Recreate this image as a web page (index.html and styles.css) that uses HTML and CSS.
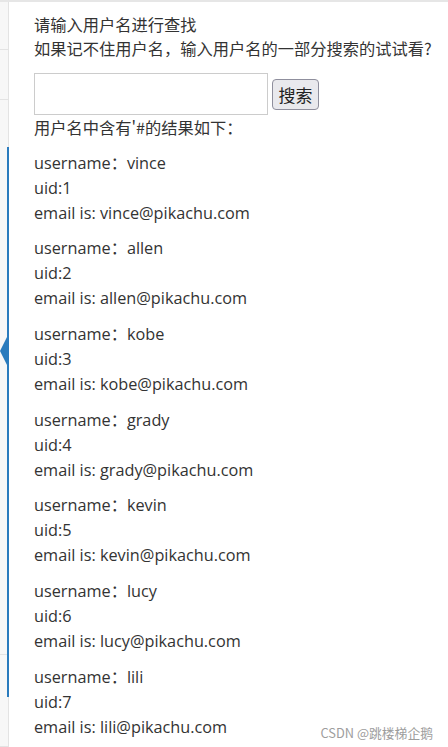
FILE: index.html
```html
<!DOCTYPE html>
<html lang="zh">
<head>
<meta charset="utf-8">
<link rel="stylesheet" href="styles.css">
</head>
<body>
<div class="page">
  <aside class="side">
    <div class="seg seg-a"></div>
    <div class="seg seg-b"></div>
    <div class="seg seg-c"></div>
    <div class="seg-active">
      <div class="act-top"></div>
      <div class="act-bottom"></div>
      <div class="arrow"></div>
    </div>
    <div class="seg seg-d"></div>
  </aside>
  <main class="main">
    <p class="intro">请输入用户名进行查找<br>如果记不住用户名，输入用户名的一部分搜索的试试看?</p>
    <form class="search">
      <input class="field" type="text">
      <button class="btn" type="button">搜索</button>
    </form>
    <p class="summary">用户名中含有'#的结果如下：</p>
    <div class="results">
      <p class="item">username：vince<br>uid:1<br>email is: vince@pikachu.com</p>
      <p class="item">username：allen<br>uid:2<br>email is: allen@pikachu.com</p>
      <p class="item">username：kobe<br>uid:3<br>email is: kobe@pikachu.com</p>
      <p class="item">username：grady<br>uid:4<br>email is: grady@pikachu.com</p>
      <p class="item">username：kevin<br>uid:5<br>email is: kevin@pikachu.com</p>
      <p class="item">username：lucy<br>uid:6<br>email is: lucy@pikachu.com</p>
      <p class="item">username：lili<br>uid:7<br>email is: lili@pikachu.com</p>
    </div>
  </main>
  <div class="watermark">CSDN @跳楼梯企鹅</div>
</div>
</body>
</html>
```
FILE: styles.css
```css
html, body {
  margin: 0;
  padding: 0;
  background: #ffffff;
}
.page {
  position: relative;
  display: flex;
  width: 448px;
  height: 747px;
  overflow: hidden;
  border-top: 2px solid #e6e6e6;
  box-sizing: border-box;
}
.side {
  width: 9px;
  flex: none;
  display: flex;
  flex-direction: column;
  background: #f7f7f7;
}
.seg {
  border-right: 1px solid #e3e3e3;
  border-bottom: 1px solid #e3e3e3;
  box-sizing: border-box;
}
.seg-a { height: 48px; }
.seg-b { height: 50px; }
.seg-c { height: 47px; border-bottom: none; }
.seg-active {
  position: relative;
  height: 550px;
  border-right: 2px solid #2a7bbd;
  box-sizing: border-box;
  display: flex;
  flex-direction: column;
}
.act-top {
  height: 507px;
  border-bottom: 1px solid #e3e3e3;
}
.act-bottom { flex: 1; }
.arrow {
  position: absolute;
  left: 0;
  top: 188px;
  width: 0;
  height: 0;
  border-top: 16px solid transparent;
  border-bottom: 16px solid transparent;
  border-right: 8px solid #2a7bbd;
}
.seg-d {
  flex: 1;
  border-right: 1px solid #e3e3e3;
}
.main {
  flex: 1;
  padding: 10px 0 0 25px;
  font-family: "Noto Sans CJK SC", "Microsoft YaHei", sans-serif;
  color: #333333;
}
.intro {
  margin: 0;
  font-size: 16.25px;
  line-height: 24px;
}
.search {
  margin: 13px 0 0 0;
  display: flex;
  align-items: center;
  gap: 4px;
}
.field {
  width: 234px;
  height: 42px;
  box-sizing: border-box;
  border: 1px solid #cccccc;
  margin: 0;
  padding: 0 6px;
  background: #fff;
}
.btn {
  width: 47px;
  height: 31px;
  padding: 0;
  margin: 0;
  font-family: "Noto Sans CJK SC", sans-serif;
  font-size: 17px;
  line-height: 1;
  color: #222;
  background: #e9e9ed;
  border: 1px solid #8f8f9d;
  border-radius: 4px;
}
.summary {
  margin: 0;
  font-size: 16.25px;
  line-height: 25px;
}
.results {
  font-family: "Open Sans", "Noto Sans CJK SC", sans-serif;
  font-size: 16.25px;
  line-height: 25px;
  color: #333333;
}
.item {
  margin: 10.67px 0 0 0;
}
.watermark {
  position: absolute;
  right: 15px;
  top: 722px;
  font-family: "Noto Sans CJK SC", sans-serif;
  font-size: 12.8px;
  line-height: 18px;
  color: #9d9d9d;
}
```
